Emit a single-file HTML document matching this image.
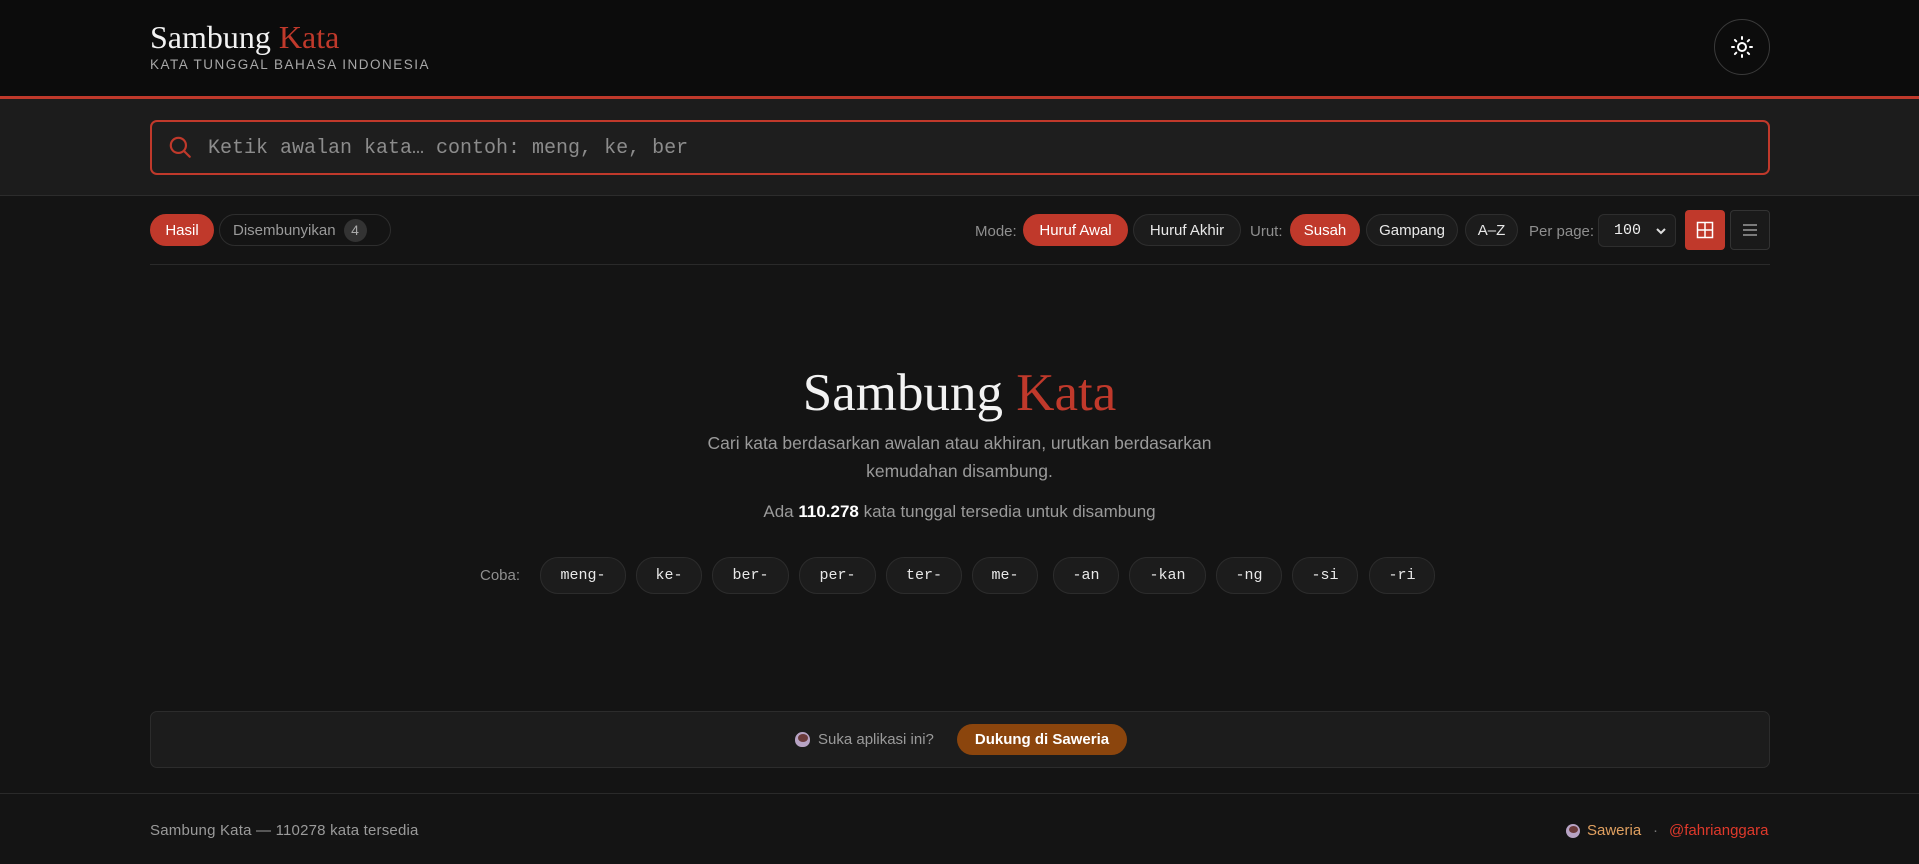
<!DOCTYPE html>
<html><head><meta charset="utf-8"><style>
*{box-sizing:border-box;margin:0;padding:0}
body{width:1919px;height:864px;background:#141414;color:#ddd;font-family:"Liberation Sans",sans-serif;position:relative;overflow:hidden}
.abs{position:absolute}
.serif{font-family:"Liberation Serif",serif}
.mono{font-family:"Liberation Mono",monospace}
.pill{position:absolute;height:32px;border-radius:16px;display:flex;align-items:center;justify-content:center;font-size:15px;border:1px solid #2e2e2e;background:#1c1c1c;color:#e8e8e8;top:214px}
.pill.on{background:#c0392b;border-color:#c0392b;color:#fff}
.lbl{position:absolute;top:216px;height:32px;line-height:32px;font-size:15px;color:#8f8f8f}
.chip{position:absolute;top:557px;height:37px;border-radius:18px;border:1px solid #2c2c2c;background:#1c1c1c;color:#e8e8e8;font-family:"Liberation Mono",monospace;font-size:15px;display:flex;align-items:center;justify-content:center}
</style></head><body>
<div class="abs" style="left:0;top:0;width:1919px;height:96px;background:#0c0c0c"></div>
<div class="abs" style="left:0;top:96px;width:1919px;height:3px;background:#c0392b"></div>
<div class="abs serif" style="left:150px;top:17px;font-size:32px;color:#f2f2f2;line-height:40px">Sambung <span style="color:#c0392b">Kata</span></div>
<div class="abs" style="left:150px;top:57px;font-size:13.5px;letter-spacing:1.5px;color:#a8a8a8">KATA TUNGGAL BAHASA INDONESIA</div>
<div class="abs" style="left:1714px;top:19px;width:56px;height:56px;border-radius:50%;border:1px solid #3a3a3a"></div>
<svg class="abs" style="left:1730px;top:35px" width="24" height="24" viewBox="0 0 24 24" fill="none" stroke="#fff" stroke-width="2" stroke-linecap="round"><circle cx="12" cy="12" r="4"/><path d="M12 2v2M12 20v2M4.9 4.9l1.4 1.4M17.7 17.7l1.4 1.4M2 12h2M20 12h2M4.9 19.1l1.4-1.4M17.7 6.3l1.4-1.4"/></svg>
<div class="abs" style="left:0;top:99px;width:1919px;height:97px;background:#1c1c1c;border-bottom:1px solid #2c2c2c"></div>
<div class="abs" style="left:150px;top:120px;width:1620px;height:55px;border:2px solid #c0392b;border-radius:7px;background:#1e1e1e"></div>
<svg class="abs" style="left:167px;top:134px" width="26" height="26" viewBox="0 0 24 24" fill="none" stroke="#c0392b" stroke-width="2" stroke-linecap="round"><circle cx="10.5" cy="10.5" r="7"/><path d="M16 16l5 5"/></svg>
<div class="abs mono" style="left:208px;top:137px;font-size:20px;color:#8c8c8c;line-height:24px">Ketik awalan kata… contoh: meng, ke, ber</div>

<div class="pill on" style="left:150px;width:64px">Hasil</div>
<div class="pill" style="left:219px;width:172px;color:#9a9a9a;background:transparent;justify-content:flex-start;padding-left:13px">Disembunyikan<span style="margin-left:8px;width:23px;height:23px;border-radius:50%;background:#333;color:#aaa;font-size:14px;display:inline-flex;align-items:center;justify-content:center">4</span></div>
<div class="lbl" style="left:975px">Mode:</div>
<div class="pill on" style="left:1023px;width:105px">Huruf Awal</div>
<div class="pill" style="left:1133px;width:108px">Huruf Akhir</div>
<div class="lbl" style="left:1250px">Urut:</div>
<div class="pill on" style="left:1290px;width:70px">Susah</div>
<div class="pill" style="left:1366px;width:92px">Gampang</div>
<div class="pill" style="left:1465px;width:53px">A–Z</div>
<div class="lbl" style="left:1529px">Per page:</div>
<div class="abs" style="left:1598px;top:214px;width:78px;height:33px;border:1px solid #2e2e2e;border-radius:6px;background:#1c1c1c"></div>
<div class="abs mono" style="left:1614px;top:222px;font-size:15px;color:#eee">100</div>
<svg class="abs" style="left:1655px;top:226px" width="12" height="10" viewBox="0 0 12 10" fill="none" stroke="#ddd" stroke-width="2"><path d="M2 3l4 4 4-4"/></svg>
<div class="abs" style="left:1685px;top:210px;width:40px;height:40px;border-radius:4px;background:#c0392b"></div>
<svg class="abs" style="left:1696px;top:221px" width="18" height="18" viewBox="0 0 18 18" fill="none" stroke="#fff" stroke-width="1.5"><rect x="1.5" y="1.5" width="15" height="15"/><path d="M9 1.5v15M1.5 9h15"/></svg>
<div class="abs" style="left:1730px;top:210px;width:40px;height:40px;border-radius:4px;border:1px solid #333;background:#1a1a1a"></div>
<svg class="abs" style="left:1742px;top:222px" width="16" height="16" viewBox="0 0 16 16" stroke="#999" stroke-width="1.5"><path d="M1 3h14M1 8h14M1 13h14"/></svg>
<div class="abs" style="left:150px;top:264px;width:1620px;height:1px;background:#2a2a2a"></div>

<div class="abs serif" style="left:0;width:1919px;top:361px;text-align:center;font-size:53px;color:#f2f2f2;line-height:64px">Sambung <span style="color:#c0392b">Kata</span></div>
<div class="abs" style="left:0;width:1919px;top:429px;text-align:center;font-size:17.5px;color:#9a9a9a;line-height:28px">Cari kata berdasarkan awalan atau akhiran, urutkan berdasarkan<br>kemudahan disambung.</div>
<div class="abs" style="left:0;width:1919px;top:502px;text-align:center;font-size:17px;color:#9a9a9a">Ada <b style="color:#fff">110.278</b> kata tunggal tersedia untuk disambung</div>

<div class="abs" style="left:480px;top:567px;font-size:15px;color:#8f8f8f">Coba:</div>
<div class="chip" style="left:540px;width:86px">meng-</div>
<div class="chip" style="left:636px;width:66px">ke-</div>
<div class="chip" style="left:712px;width:77px">ber-</div>
<div class="chip" style="left:799px;width:77px">per-</div>
<div class="chip" style="left:886px;width:76px">ter-</div>
<div class="chip" style="left:972px;width:66px">me-</div>
<div class="chip" style="left:1053px;width:66px">-an</div>
<div class="chip" style="left:1129px;width:77px">-kan</div>
<div class="chip" style="left:1216px;width:66px">-ng</div>
<div class="chip" style="left:1292px;width:66px">-si</div>
<div class="chip" style="left:1369px;width:66px">-ri</div>

<div class="abs" style="left:150px;top:711px;width:1620px;height:57px;border:1px solid #2c2c2c;border-radius:7px;background:#1c1c1c"></div>
<div class="abs" style="left:795px;top:732px;width:15px;height:15px;border-radius:50% 50% 45% 45%;background:#b7a3c4"><div style="margin:2px auto;width:10px;height:8px;border-radius:50%;background:#6b3b3b"></div></div>
<div class="abs" style="left:818px;top:731px;font-size:15px;color:#9a9a9a">Suka aplikasi ini?</div>
<div class="abs" style="left:957px;top:724px;width:170px;height:31px;border-radius:16px;background:#8b450d;color:#fff;font-weight:bold;font-size:15px;display:flex;align-items:center;justify-content:center">Dukung di Saweria</div>

<div class="abs" style="left:0;top:793px;width:1919px;height:1px;background:#2a2a2a"></div>
<div class="abs" style="left:150px;top:822px;font-size:15px;color:#9a9a9a;letter-spacing:0.2px">Sambung Kata — 110278 kata tersedia</div>
<div class="abs" style="left:1566px;top:824px;width:14px;height:14px;border-radius:50%;background:#b7a3c4"><div style="margin:2px auto;width:9px;height:7px;border-radius:50%;background:#6b3b3b"></div></div>
<div class="abs" style="left:1587px;top:822px;font-size:15px;color:#e0a060">Saweria</div>
<div class="abs" style="left:1653px;top:822px;font-size:15px;color:#777">·</div>
<div class="abs" style="left:1669px;top:822px;font-size:15px;color:#e0392b">@fahrianggara</div>
</body></html>
